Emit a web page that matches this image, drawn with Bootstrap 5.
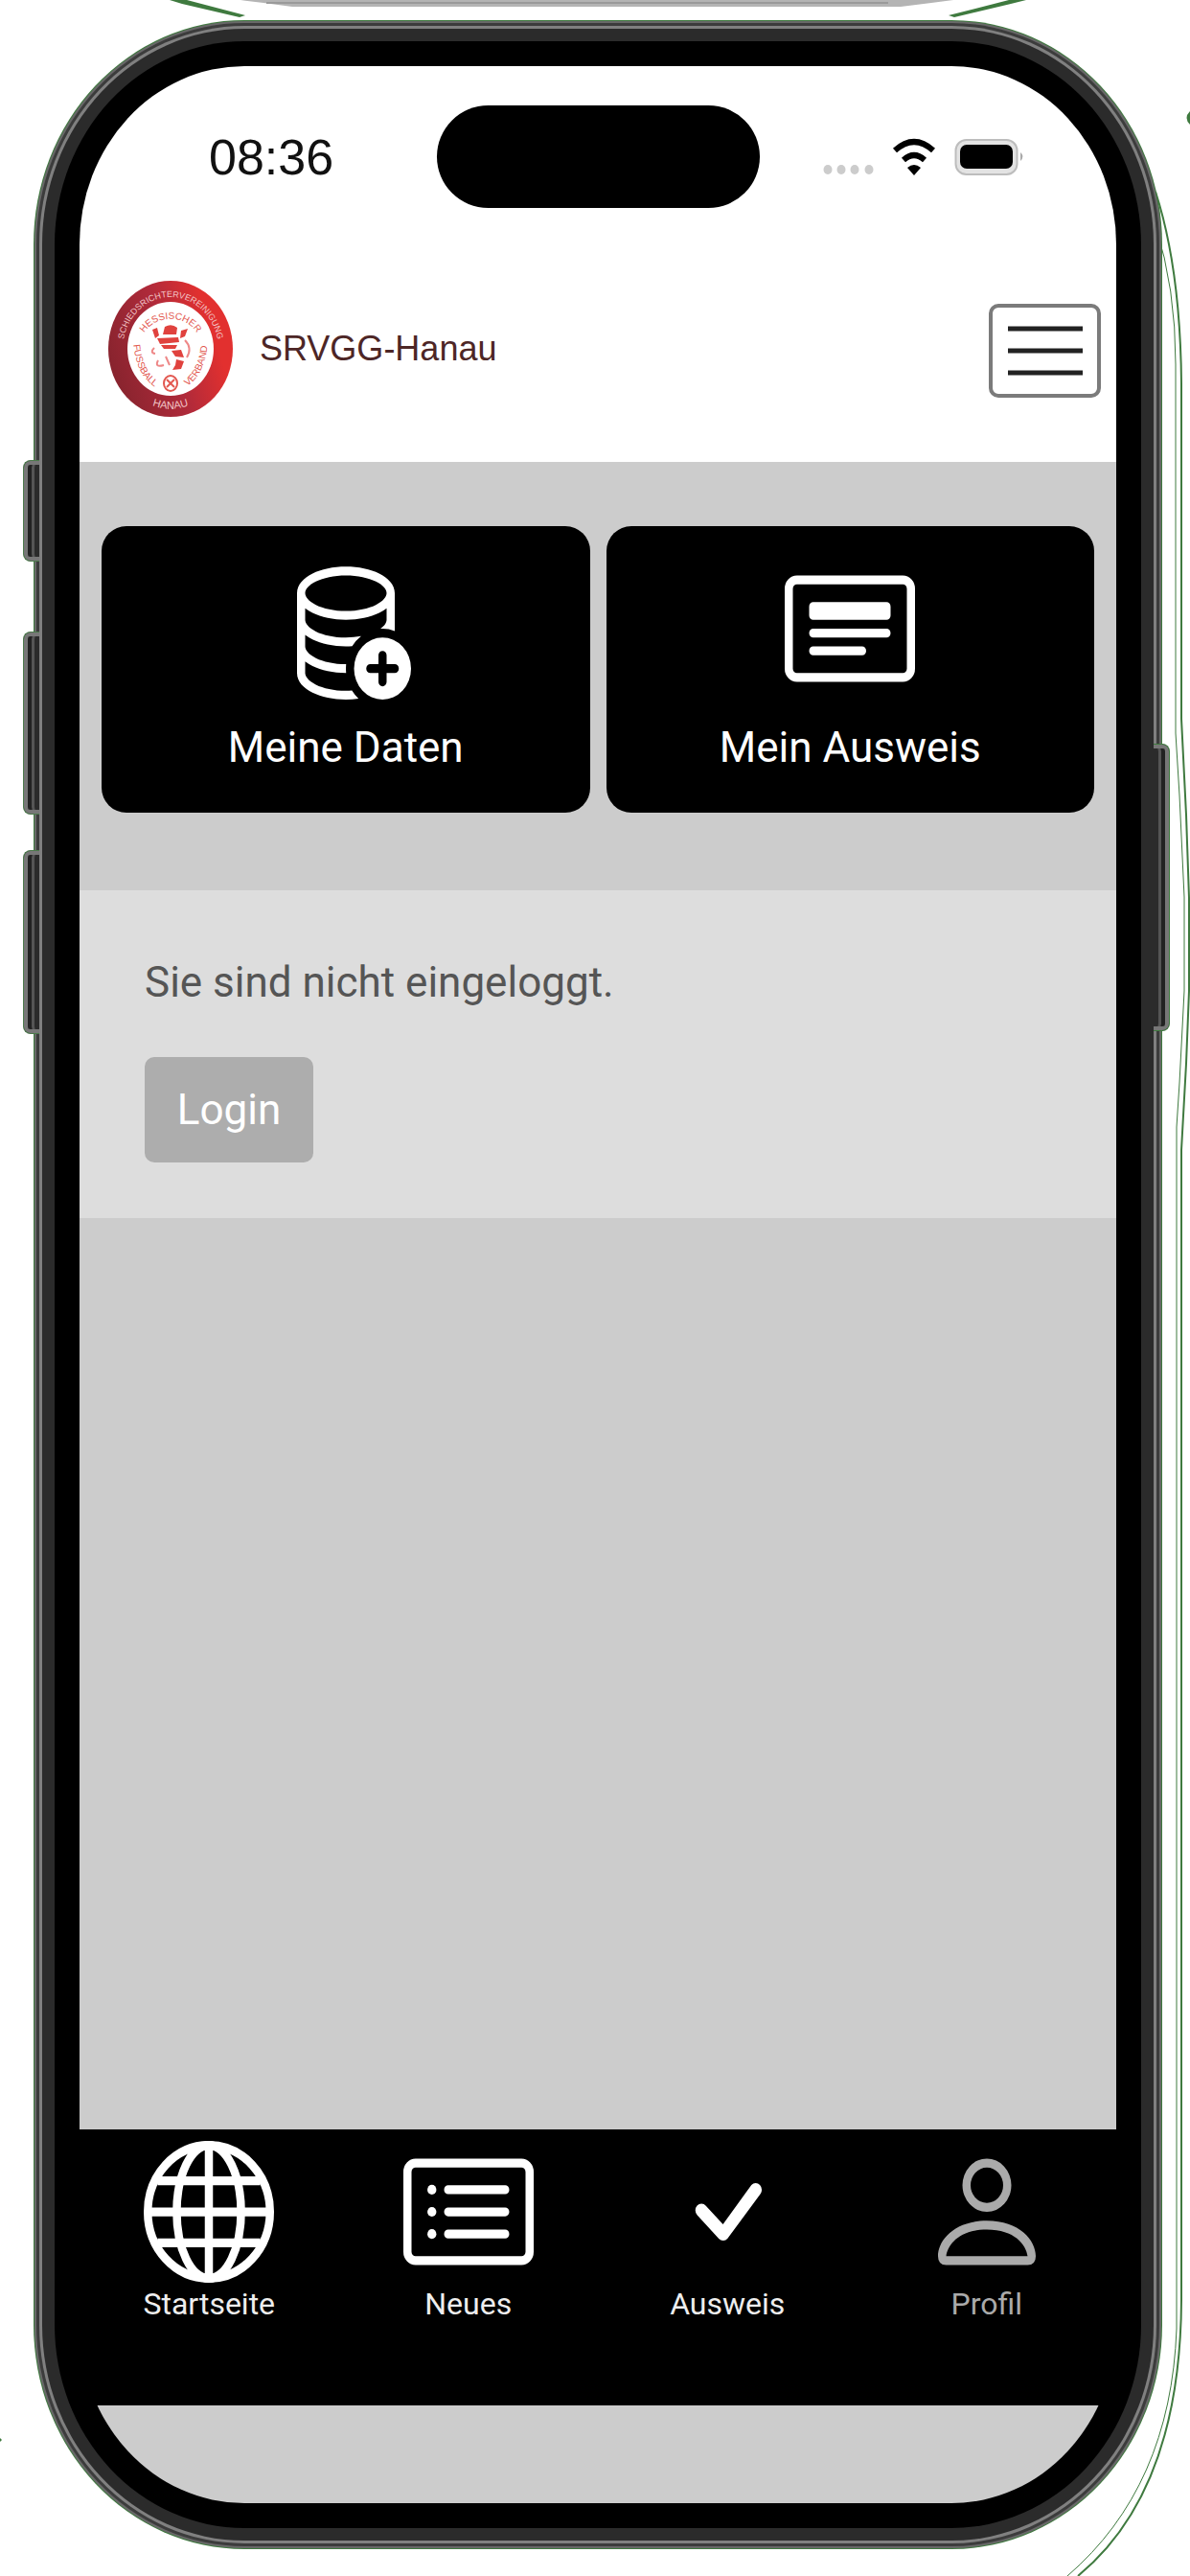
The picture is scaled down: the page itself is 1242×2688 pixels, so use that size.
<!DOCTYPE html>
<html lang="de">
<head>
<meta charset="utf-8">
<meta name="viewport" content="width=device-width, initial-scale=1">
<title>SRVGG-Hanau</title>
<link href="https://cdn.jsdelivr.net/npm/bootstrap@5.3.0/dist/css/bootstrap.min.css" rel="stylesheet">
<style>
  body { background: #fff; font-family: Roboto, "Noto Sans", sans-serif; }
  .stage { min-height: 100vh; padding: 69px 77px 76px 83px; }
  .screen {
    background: #000; border-radius: 172px / 186px;
    box-shadow: 0 0 0 26px #000, 0 0 0 39px #2b2b2b, 0 0 0 42px #808080,
      0 0 0 45px #3c3c3c, 0 0 0 47px #686868, 0 0 0 48px #3f7a3f;
  }
  .surface { background: #ccc; }
  .backdrop-lines { top: 0; left: 0; pointer-events: none; }
  .side-key { width: 17px; background: #2b2b2b; border: 1px solid #4c7a4c; border-right: 0; left: 24px;
    border-radius: 8px 0 0 8px; box-shadow: inset 4px 0 0 #777, inset 0 4px 0 #777, inset 0 -4px 0 #777, inset 8px 0 0 #222, inset 11px 0 0 #555; }
  .key-silent { top: 480px; height: 106px; }
  .key-up { top: 659px; height: 191px; }
  .key-down { top: 887px; height: 192px; }
  .key-power { top: 776px; height: 300px; left: auto; right: 21px;
    border: 1px solid #3f7a3f; border-left: 0; border-radius: 0 8px 8px 0;
    box-shadow: inset -4px 0 0 #777, inset 0 4px 0 #777, inset 0 -4px 0 #777, inset -8px 0 0 #222, inset -11px 0 0 #555; }
  .status { display: grid; grid-template-columns: 1fr auto 1fr; height: 189px; }
  .clock { font-size: 52px; line-height: 60px; color: #111; padding-left: 135px; font-family: "Liberation Sans", Arial, sans-serif; }
  .island { width: 337px; height: 107px; border-radius: 54px; background: #000; }
  .status-icons { padding-right: 95px; }
  .app-bar { height: 224px; padding: 0 16px 12px 30px; }
  .brand-name { font-family: "Liberation Sans", Arial, sans-serif; font-size: 36px; line-height: 44px; color: #4d2626; }
  .menu-toggle { width: 117px; height: 98px; border: 4px solid #7b7b7b; border-radius: 10px; padding: 0; background: #fff; margin-top: 4px; }
  .tiles { padding: 67px 23px 81px; gap: 17px; }
  .tile { height: 299px; border-radius: 26px; background: #000; color: #fff; font-size: 44px; line-height: 52px; padding-top: 33px; gap: 24px; }
  .tile:hover { color: #fff; }
  .notice { background: #ddd; padding: 68px 68px 58px; color: #555; font-size: 44px; line-height: 56px; }
  .login-btn { width: 176px; height: 110px; border-radius: 10px; background: #adadad; color: #fff; font-size: 44px; margin-top: 50px; border: 0; }
  .tabs { height: 288px; background: #000; padding-top: 12px; }
  .tab-link { color: #eee; font-size: 32px; line-height: 44px; }
  .tab-dim { color: #aaa; }
  .home-area { height: 102px; }
</style>
</head>
<body>
<div class="stage position-relative d-flex flex-column overflow-hidden">
  <svg class="backdrop-lines position-absolute" width="1242" height="2688" viewBox="0 0 1242 2688" fill="none" aria-hidden="true">
    <path d="M251 0H995L972 3L940 7H305L275 3Z" fill="#b4b4b4"/>
    <path d="M278 3H927" stroke="#9a9a9a" stroke-width="2"/>
    <path d="M177 0H195L256 16L250 18L190 4Z" fill="#3f7a3f"/>
    <path d="M1071 0H1053L990 16L996 18L1055 4Z" fill="#3f7a3f"/>
    <path d="M1242 116Q1235 123 1242 130Z" fill="#3f7a3f"/>
    <path d="M1206 200Q1232 280 1233 400V750L1238 850L1241 937V1034L1238 1110L1233 1200V2400Q1232 2600 1125 2688" stroke="#3f7a3f" stroke-width="2"/>
    <path d="M1206 236Q1227 300 1227 380V765L1231 830L1236 936V1034L1231 1130L1228 1176V2430Q1222 2595 1114 2688" stroke="#3f7a3f" stroke-width="1"/>
    <path d="M0 2544L2 2546L0 2548Z" fill="#3f7a3f"/>
  </svg>

  <div class="screen flex-grow-1 d-flex flex-column overflow-hidden position-relative">
    <header class="bg-white">
      <div class="status align-items-center">
        <span class="clock">08:36</span>
        <span class="island"></span>
        <span class="status-icons d-flex justify-content-end">
          <svg width="211" height="40" viewBox="0 0 211 40" role="img" aria-label="WLAN und Akku">
            <g fill="#ccc"><ellipse cx="5" cy="33" rx="4.500" ry="5"/><ellipse cx="19" cy="33" rx="4.500" ry="5"/><ellipse cx="33" cy="33" rx="4.500" ry="5"/><ellipse cx="48" cy="33" rx="4.500" ry="5"/></g>
            <g fill="none" stroke="#000" stroke-width="6"><path d="M75 13Q95 -5 115 13"/><path d="M84 23Q95 13 106 23"/></g>
            <path d="M88 31Q95 25 102 31L95 39Z" fill="#000"/>
            <rect x="138.500" y="2" width="64" height="36" rx="11" fill="#e3e3e3" stroke="#bdbdbd" stroke-width="2"/>
            <rect x="143" y="7" width="55" height="25" rx="7" fill="#000"/>
            <path d="M206 15Q211 19 206 24Z" fill="#aaa"/>
          </svg>
        </span>
      </div>
      <nav class="app-bar d-flex align-items-center justify-content-between">
        <a href="#" class="d-flex align-items-center text-decoration-none gap-4">
          <svg width="130" height="142" viewBox="0 0 130 142" role="img" aria-label="Logo Schiedsrichtervereinigung Hanau">
            <defs>
              <linearGradient id="ring" x1="0" y1="0.700" x2="1" y2="0.350"><stop offset="0" stop-color="#85232d"/><stop offset="0.500" stop-color="#b02a3a"/><stop offset="0.850" stop-color="#e2302f"/></linearGradient>
              <path id="arcOuter" d="M15 72A50 55 0 0 1 115 72"/>
              <path id="arcBottom" d="M30 122Q65 145 100 122"/>
              <path id="arcTop" d="M35 60A31 27 0 0 1 95 60"/>
              <path id="arcLeft" d="M26 60Q27 100 54 114"/>
              <path id="arcRight" d="M76 114Q103 100 104 60"/>
            </defs>
            <ellipse cx="65" cy="71" rx="65" ry="71" fill="url(#ring)"/>
            <ellipse cx="65" cy="71" rx="45" ry="49" fill="#fff"/>
            <g font-family="Liberation Sans, sans-serif" text-anchor="middle">
              <text font-size="9" fill="#f3c4c6"><textPath href="#arcOuter" startOffset="50%">SCHIEDSRICHTERVEREINIGUNG</textPath></text>
              <text font-size="11" fill="#f3c4c6"><textPath href="#arcBottom" startOffset="50%">HANAU</textPath></text>
              <g fill="#e2574f" font-size="10">
                <text><textPath href="#arcTop" startOffset="50%">HESSISCHER</textPath></text>
                <text><textPath href="#arcLeft" startOffset="50%">FUSSBALL</textPath></text>
                <text><textPath href="#arcRight" startOffset="50%">VERBAND</textPath></text>
              </g>
            </g>
            <g fill="#e0423e">
              <path d="M46 51L51 49L53 57L49 60Z"/>
              <path d="M59 48Q66 44 72 49L71 56H57Z"/>
              <path d="M76 52L83 50L80 58L75 60Z"/>
              <path d="M51 60L73 59L74 64L54 66Z"/>
              <path d="M55 67H72L70 71H58Z"/>
              <path d="M66 73L76 72L79 80L70 79Z"/>
              <path d="M71 82L79 84L76 92L67 93L70 88Z"/>
            </g>
            <g fill="none" stroke="#e88" stroke-width="2">
              <path d="M48 70Q43 75 49 76M52 83Q48 91 58 88M60 79L64 88M80 62Q88 70 82 80"/>
              <ellipse cx="65" cy="107" rx="7" ry="8" stroke="#e2574f"/><path d="M61 103L69 111M69 103L61 111" stroke="#e2574f"/>
            </g>
          </svg>
          <span class="brand-name ps-1">SRVGG-Hanau</span>
        </a>
        <button type="button" class="menu-toggle d-flex align-items-center justify-content-center" aria-label="Menü">
          <svg width="78" height="54" viewBox="0 0 78 54" stroke="#222" stroke-width="5"><path d="M0 4H78M0 27H78M0 50H78"/></svg>
        </button>
      </nav>
    </header>

    <main class="surface flex-grow-1">
      <div class="tiles d-flex">
        <a href="#" class="tile flex-fill w-50 d-flex flex-column align-items-center text-decoration-none">
          <svg width="136" height="148" viewBox="0 0 16 16" preserveAspectRatio="none" fill="#fff" aria-hidden="true"><path d="M12.500 16a3.500 3.500 0 1 0 0-7 3.500 3.500 0 0 0 0 7Zm.5-5v1h1a.5.5 0 0 1 0 1h-1v1a.5.5 0 1 1-1 0v-1h-1a.5.5 0 1 1 0-1h1v-1a.5.5 0 0 1 1 0Z"/><path d="M12.096 6.223A4.920 4.920 0 0 0 13 5.698V7c0 .289-.213.654-.753 1.007a4.493 4.493 0 0 1 1.753.25V4c0-1.007-.875-1.755-1.904-2.223C11.022 1.289 9.573 1 8 1s-3.022.289-4.096.777C2.875 2.245 2 2.993 2 4v9c0 1.007.875 1.755 1.904 2.223C4.978 15.710 6.427 16 8 16c.536 0 1.058-.034 1.555-.097a4.525 4.525 0 0 1-.813-.927C8.500 14.992 8.252 15 8 15c-1.464 0-2.766-.27-3.682-.687C3.356 13.875 3 13.373 3 13v-1.302c.271.202.58.378.904.525C4.978 12.710 6.427 13 8 13h.027a4.552 4.552 0 0 1 0-1H8c-1.464 0-2.766-.27-3.682-.687C3.356 10.875 3 10.373 3 10V8.698c.271.202.58.378.904.525C4.978 9.710 6.427 10 8 10c.262 0 .52-.008.774-.024a4.525 4.525 0 0 1 1.102-1.132C9.298 8.944 8.666 9 8 9c-1.464 0-2.766-.27-3.682-.687C3.356 7.875 3 7.373 3 7V5.698c.271.202.58.378.904.525C4.978 6.711 6.427 7 8 7s3.022-.289 4.096-.777ZM3 4c0-.374.356-.875 1.318-1.313C5.234 2.271 6.536 2 8 2s2.766.27 3.682.687C12.644 3.125 13 3.627 13 4c0 .374-.356.875-1.318 1.313C10.766 5.729 9.464 6 8 6s-2.766-.27-3.682-.687C3.356 4.875 3 4.373 3 4Z"/></svg>
          <span>Meine Daten</span>
        </a>
        <a href="#" class="tile flex-fill w-50 d-flex flex-column align-items-center text-decoration-none">
          <svg width="136" height="148" viewBox="0 0 16 16" preserveAspectRatio="none" fill="#fff" aria-hidden="true"><path d="M14.500 3a.5.5 0 0 1 .5.5v9a.5.5 0 0 1-.5.5h-13a.5.5 0 0 1-.5-.5v-9a.5.5 0 0 1 .5-.5h13zm-13-1A1.500 1.500 0 0 0 0 3.500v9A1.500 1.500 0 0 0 1.500 14h13a1.500 1.500 0 0 0 1.500-1.500v-9A1.500 1.500 0 0 0 14.500 2h-13z"/><path d="M3 8.500a.5.5 0 0 1 .5-.5h9a.5.5 0 0 1 0 1h-9a.5.5 0 0 1-.5-.5zm0 2a.5.5 0 0 1 .5-.5h6a.5.5 0 0 1 0 1h-6a.5.5 0 0 1-.5-.5zm0-5a.5.5 0 0 1 .5-.5h9a.5.5 0 0 1 .5.5v1a.5.5 0 0 1-.5.5h-9a.5.5 0 0 1-.5-.5v-1z"/></svg>
          <span>Mein Ausweis</span>
        </a>
      </div>
      <section class="notice">
        <p class="mb-0">Sie sind nicht eingeloggt.</p>
        <button type="button" class="login-btn btn p-0">Login</button>
      </section>
    </main>

    <nav class="tabs d-flex">
      <a href="#" class="tab-link flex-fill w-25 d-flex flex-column align-items-center text-decoration-none">
        <svg width="136" height="148" viewBox="0 0 16 16" preserveAspectRatio="none" fill="none" stroke="#fff" stroke-width="1" aria-hidden="true"><circle cx="8" cy="8" r="7.500"/><ellipse cx="8" cy="8" rx="3.950" ry="7.500"/><path d="M8 .5V15.500M.5 8H15.500M1.700 4.500H14.300M1.700 11.500H14.300"/></svg>
        <span>Startseite</span>
      </a>
      <a href="#" class="tab-link flex-fill w-25 d-flex flex-column align-items-center text-decoration-none">
        <svg width="136" height="148" viewBox="0 0 16 16" preserveAspectRatio="none" fill="#fff" aria-hidden="true"><path d="M14.500 3a.5.5 0 0 1 .5.5v9a.5.5 0 0 1-.5.5h-13a.5.5 0 0 1-.5-.5v-9a.5.5 0 0 1 .5-.5h13zm-13-1A1.500 1.500 0 0 0 0 3.500v9A1.500 1.500 0 0 0 1.500 14h13a1.500 1.500 0 0 0 1.500-1.500v-9A1.500 1.500 0 0 0 14.500 2h-13z"/><path d="M5 8a.5.5 0 0 1 .5-.5h7a.5.5 0 0 1 0 1h-7A.5.5 0 0 1 5 8zm0-2.500a.5.5 0 0 1 .5-.5h7a.5.5 0 0 1 0 1h-7a.5.5 0 0 1-.5-.5zm0 5a.5.5 0 0 1 .5-.5h7a.5.5 0 0 1 0 1h-7a.5.5 0 0 1-.5-.5z"/><circle cx="3.500" cy="5.500" r=".55"/><circle cx="3.500" cy="8" r=".55"/><circle cx="3.500" cy="10.500" r=".55"/></svg>
        <span>Neues</span>
      </a>
      <a href="#" class="tab-link flex-fill w-25 d-flex flex-column align-items-center text-decoration-none">
        <svg width="136" height="148" viewBox="0 0 16 16" preserveAspectRatio="none" fill="#fff" aria-hidden="true"><path d="M10.970 4.970a.75.75 0 0 1 1.070 1.050l-3.990 4.990a.75.75 0 0 1-1.080.02L4.324 8.384a.75.75 0 1 1 1.060-1.060l2.094 2.093 3.473-4.425a.267.267 0 0 1 .02-.022z"/></svg>
        <span>Ausweis</span>
      </a>
      <a href="#" class="tab-link tab-dim flex-fill w-25 d-flex flex-column align-items-center text-decoration-none">
        <svg width="136" height="148" viewBox="0 0 16 16" preserveAspectRatio="none" fill="#aaa" aria-hidden="true"><path d="M8 8a3 3 0 1 0 0-6 3 3 0 0 0 0 6Zm2-3a2 2 0 1 1-4 0 2 2 0 0 1 4 0Z"/><path fill-rule="evenodd" d="M8 9C4 9 2 11.200 2 13Q2 14 3 14H13Q14 14 14 13C14 11.200 12 9 8 9ZM3 13C3.200 11.700 4.600 10 8 10S12.800 11.700 13 13Z"/></svg>
        <span>Profil</span>
      </a>
    </nav>
    <div class="surface home-area"></div>
  </div>

  <span class="side-key key-silent position-absolute"></span>
  <span class="side-key key-up position-absolute"></span>
  <span class="side-key key-down position-absolute"></span>
  <span class="side-key key-power position-absolute"></span>
</div>
<script src="https://cdn.jsdelivr.net/npm/bootstrap@5.3.0/dist/js/bootstrap.bundle.min.js"></script>
</body>
</html>
